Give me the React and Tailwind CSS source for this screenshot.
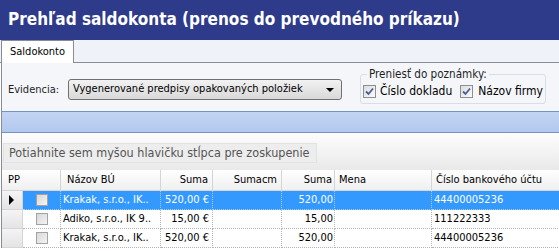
import React from 'react';

const cols = 'grid grid-cols-[21px_38px_100px_52px_69px_53px_97px_140px]';

const rows = [
  { name: 'Krakak, s.r.o., IK..', suma: '520,00 €', suma2: '520,00', ucet: '44400005236', sel: true },
  { name: 'Adiko, s.r.o., IK 9..', suma: '15,00 €', suma2: '15,00', ucet: '111222333' },
  { name: 'Krakak, s.r.o., IK..', suma: '520,00 €', suma2: '520,00', ucet: '44400005236' },
];

// Zaškrtávacie políčko v štýle Windows
function Check({ checked }) {
  return (
    <span className="w-[13px] h-[13px] shrink-0 border border-[#8e8f8f] bg-gradient-to-br from-[#dcdcdc] to-[#fbfbfb] flex items-center justify-center">
      {checked && (
        <svg width="9" height="9" viewBox="0 0 9 9">
          <path d="M1 4.5 L3.5 7 L8 1.5" stroke="#4a5f97" strokeWidth="1.8" fill="none" />
        </svg>
      )}
    </span>
  );
}

function GridCheck() {
  return <span className="w-[12px] h-[12px] border border-[#a3a3a3] bg-gradient-to-br from-[#d8d8d8] to-[#f4f4f4]" />;
}

export default function App() {
  return (
    <div className="w-[559px] h-[251px] overflow-hidden bg-white text-[11px] text-black font-['DejaVu_Sans_Condensed','Liberation_Sans',sans-serif]">
      {/* Titulok */}
      <div className="h-[40px] bg-[#2e3a8a] flex items-center pl-[8px] text-white text-[17px] font-bold whitespace-nowrap">
        Prehľad saldokonta (prenos do prevodného príkazu)
      </div>

      {/* Záložky */}
      <div className="h-[23px] bg-[#eff2f8] flex items-end pl-px border-b border-[#898c95]">
        <div className="h-[23px] -mb-px bg-white border border-b-0 border-[#898c95] px-[8px] flex items-center">Saldokonto</div>
      </div>

      <div className="ml-px border-l border-[#898c95]">
        {/* Filter */}
        <div className="h-[48px] bg-[#f5f6f9] flex pl-[6px]">
          <div className="w-[60px] mt-[19px] text-[#1e1e1e]">Evidencia:</div>
          <div className="w-[274px] h-[21px] mt-[16px] border border-[#707070] rounded-[3px] bg-gradient-to-b from-[#f2f2f2] to-[#d9d9d9] flex items-center pl-[4px] pr-[7px] justify-between whitespace-nowrap">
            <span>Vygenerované predpisy opakovaných položiek</span>
            <span className="w-0 h-0 border-l-[4px] border-r-[4px] border-t-[4px] border-l-transparent border-r-transparent border-t-black" />
          </div>
          <fieldset className="ml-[18px] mt-[4px] w-[185px] h-[37px] border border-[#d5dfe5] rounded-[3px] px-[2px] text-[11.6px]">
            <legend className="ml-[4px] px-[2px] leading-[14px] text-[#1e1e1e]">Preniesť do poznámky:</legend>
            <div className="flex items-center h-[18px] mt-[1px] whitespace-nowrap text-[12px]">
              <Check checked />
              <span className="ml-[4px]">Číslo dokladu</span>
              <span className="ml-[8px]"><Check checked /></span>
              <span className="ml-[5px]">Názov firmy</span>
            </div>
          </fieldset>
        </div>

        {/* Modrý pás */}
        <div className="h-[22px] border-y border-[#7393c6] bg-gradient-to-b from-[#c3d5f3] to-[#b2c8ee]" />

        {/* Zoskupovanie */}
        <div className="h-[37px] bg-gradient-to-b from-[#fdfdfd] to-[#e9e9e9] pt-[10px] pl-px">
          <div className="w-[314px] h-[20px] bg-[#ededed] border border-[#e2e2e2] flex items-center pl-[5px] text-[#555] text-[12.5px] whitespace-nowrap">
            Potiahnite sem myšou hlavičku stĺpca pre zoskupenie
          </div>
        </div>

        {/* Mriežka */}
        <div className={`${cols} h-[21px] bg-gradient-to-b from-white to-[#efefef] border-b border-[#d5d5d5]`}>
          <div className="col-span-2 border-r border-[#d5d5d5] flex items-center pl-[6px]">PP</div>
          <div className="border-r border-[#d5d5d5] flex items-center pl-[6px]">Názov BÚ</div>
          <div className="border-r border-[#d5d5d5] flex items-center justify-end pr-[4px]">Suma</div>
          <div className="border-r border-[#d5d5d5] flex items-center justify-end pr-[4px]">Sumacm</div>
          <div className="border-r border-[#d5d5d5] flex items-center justify-end pr-[2px]">Suma</div>
          <div className="border-r border-[#d5d5d5] flex items-center pl-[4px]">Mena</div>
          <div className="flex items-center pl-[4px] whitespace-nowrap">Číslo bankového účtu</div>
        </div>

        {rows.map((r, i) => {
          const cell = r.sel
            ? 'bg-[#3399ff] text-white border-r border-b border-dotted border-[#a8ccf5]'
            : 'bg-white border-r border-b border-dotted border-[#b4b4b4]';
          return (
            <div key={i} className={`${cols} h-[19px]`}>
              <div className="bg-gradient-to-b from-[#f4f4f4] to-[#e4e4e4] border-r border-b border-[#d5d5d5] flex items-center pl-[7px]">
                {r.sel && <span className="w-0 h-0 border-t-[5px] border-b-[5px] border-l-[5px] border-t-transparent border-b-transparent border-l-black" />}
              </div>
              <div className={`${cell} flex items-center justify-center`}><GridCheck /></div>
              <div className={`${cell} flex items-center pl-[2px] whitespace-nowrap overflow-hidden`}>{r.name}</div>
              <div className={`${cell} flex items-center justify-end pr-[3px] whitespace-nowrap`}>{r.suma}</div>
              <div className={cell} />
              <div className={`${cell} flex items-center justify-end pr-[1px]`}>{r.suma2}</div>
              <div className={cell} />
              <div className={`${cell} flex items-center pl-[2px]`}>{r.ucet}</div>
            </div>
          );
        })}
      </div>
    </div>
  );
}
